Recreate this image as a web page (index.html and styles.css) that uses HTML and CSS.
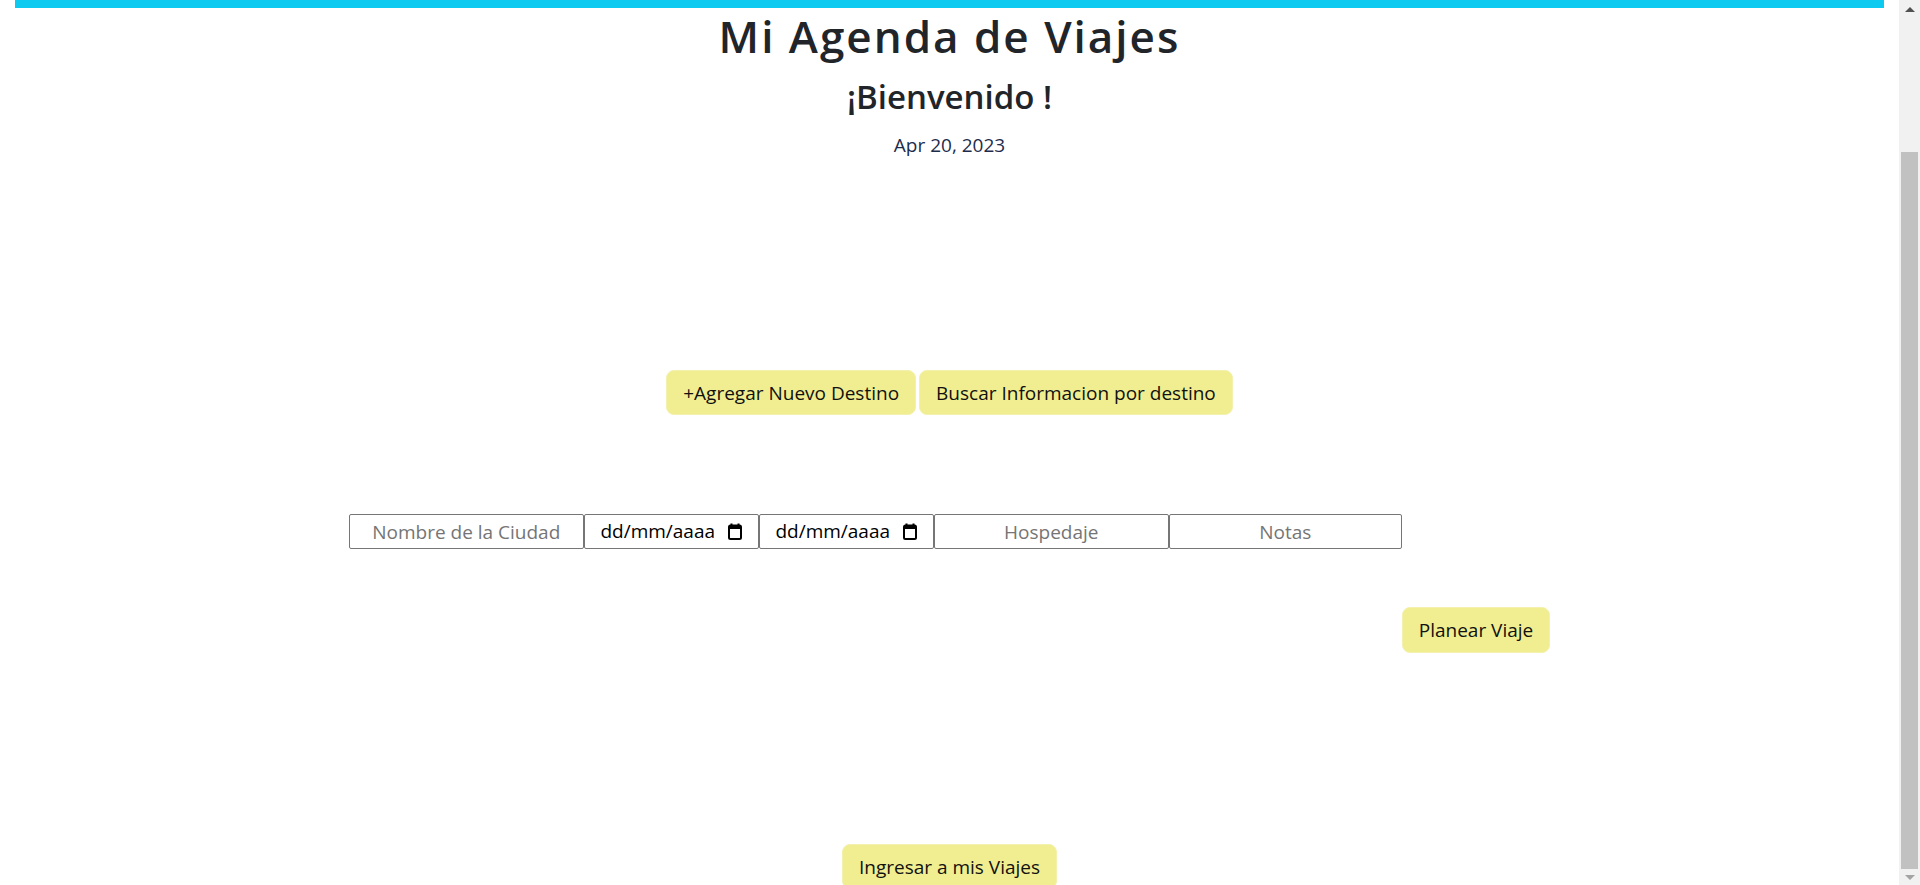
FILE: index.html
```html
<!DOCTYPE html>
<html lang="es">
<head>
<meta charset="utf-8">
<title>Mi Agenda de Viajes</title>
<link rel="stylesheet" href="styles.css">
</head>
<body>
<main class="page">
  <div class="topbar"></div>
  <header class="hero">
    <h1 class="title">Mi Agenda de Viajes</h1>
    <h2 class="welcome">¡Bienvenido !</h2>
    <p class="today">Apr 20, 2023</p>
  </header>

  <section class="actions">
    <button class="btn">+Agregar Nuevo Destino</button>
    <button class="btn">Buscar Informacion por destino</button>
  </section>

  <section class="trip-form">
    <input class="field field-text" type="text" placeholder="Nombre de la Ciudad">
    <div class="field field-date">
      <span class="date-text">dd/mm/aaaa</span>
      <svg class="cal" width="14" height="17" viewBox="0 0 14 17"><path d="M3.5 0.5v3M10.5 0.5v3" stroke="#000" stroke-width="2" fill="none"/><rect x="1" y="2.5" width="12" height="13.5" rx="1.5" stroke="#000" stroke-width="2" fill="none"/><rect x="1" y="2.5" width="12" height="3.5" fill="#000"/></svg>
    </div>
    <div class="field field-date">
      <span class="date-text">dd/mm/aaaa</span>
      <svg class="cal" width="14" height="17" viewBox="0 0 14 17"><path d="M3.5 0.5v3M10.5 0.5v3" stroke="#000" stroke-width="2" fill="none"/><rect x="1" y="2.5" width="12" height="13.5" rx="1.5" stroke="#000" stroke-width="2" fill="none"/><rect x="1" y="2.5" width="12" height="3.5" fill="#000"/></svg>
    </div>
    <input class="field field-text" type="text" placeholder="Hospedaje">
    <input class="field field-text field-notes" type="text" placeholder="Notas">
    <button class="btn btn-plan">Planear Viaje</button>
  </section>

  <section class="enter">
    <button class="btn">Ingresar a mis Viajes</button>
  </section>
</main>
<div class="scrollbar" aria-hidden="true">
  <div class="sb-arrow"><span class="tri-up"></span></div>
  <div class="sb-thumb"></div>
  <div class="sb-arrow sb-arrow-down"><span class="tri-down"></span></div>
</div>
</body>
</html>
```

FILE: styles.css
```css
html, body {
  margin: 0;
  padding: 0;
}

body {
  display: flex;
  height: 100vh;
  overflow: hidden;
  font-family: "Open Sans", "Noto Sans", "DejaVu Sans", sans-serif;
  color: #212529;
  background: #fff;
}

.page {
  flex: 1;
  min-width: 0;
  overflow: hidden;
}

/* scrollbar as in the screenshot */
.scrollbar {
  flex: none;
  width: 21px;
  background: #f1f1f1;
  display: flex;
  flex-direction: column;
  align-items: center;
}

.sb-arrow {
  height: 17px;
  width: 100%;
  display: flex;
  justify-content: center;
  align-items: flex-start;
  padding-top: 7px;
  box-sizing: border-box;
}

.sb-arrow-down {
  height: 16px;
  padding-top: 6px;
}

.tri-up {
  width: 0;
  height: 0;
  border-left: 5px solid transparent;
  border-right: 5px solid transparent;
  border-bottom: 5px solid #505050;
}

.tri-down {
  width: 0;
  height: 0;
  border-left: 5px solid transparent;
  border-right: 5px solid transparent;
  border-top: 5px solid #a3a3a3;
}

.sb-thumb {
  width: 17px;
  height: 717px;
  margin-top: 135px;
  background: #c1c1c1;
}

.topbar {
  height: 8px;
  margin: 0 15px;
  background: #0dcaf0;
}

.hero {
  text-align: center;
}

.title {
  margin: 3px 0 0;
  font-size: 44px;
  font-weight: 600;
  line-height: 50px;
  letter-spacing: 2px;
}

.welcome {
  margin: 16px 0 0;
  font-size: 33px;
  font-weight: 600;
  line-height: 40px;
}

.today {
  margin: 14px 0 0;
  font-size: 19px;
  line-height: 28px;
  color: #1e2c4c;
}

.actions {
  display: flex;
  justify-content: center;
  gap: 3px;
  margin-top: 211px;
}

.btn {
  height: 45px;
  padding: 0 16px;
  font-family: inherit;
  font-size: 19px;
  color: #111;
  background: #f0ee90;
  border: 1px solid #f3f1ad;
  border-radius: 8px;
  cursor: pointer;
}

.trip-form {
  display: flex;
  justify-content: center;
  align-items: flex-start;
  margin-top: 99px;
}

.field {
  box-sizing: border-box;
  height: 35px;
  margin: 0;
  border: 1px solid #767676;
  border-radius: 2px;
  background: #fff;
  font-family: inherit;
  font-size: 19px;
  color: #000;
}

.field-text {
  width: 235px;
  padding: 0 2px;
  text-align: center;
}

.field-notes {
  width: 233px;
}

.field-text::placeholder {
  color: #757575;
}

.field-date {
  width: 175px;
  display: flex;
  align-items: center;
  justify-content: center;
  gap: 13px;
}

.date-text {
  line-height: 1;
}

.cal {
  display: block;
}

.btn-plan {
  margin-top: 93px;
  height: 46px;
}

.enter {
  display: flex;
  justify-content: center;
  margin-top: 191px;
}
```
